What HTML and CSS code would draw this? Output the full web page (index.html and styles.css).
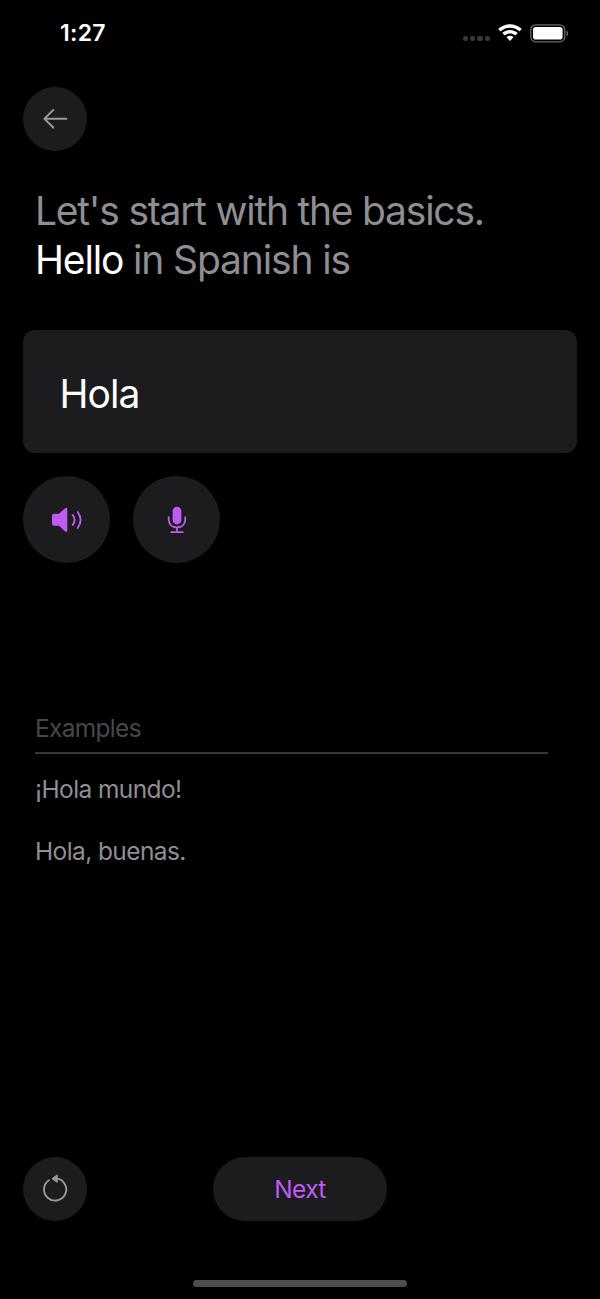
FILE: index.html
```html
<!DOCTYPE html>
<html lang="en">
<head>
<meta charset="utf-8">
<title>Spanish basics</title>
<link rel="stylesheet" href="styles.css">
</head>
<body>
<div class="screen">
  <header class="status">
    <span class="time">1:27</span>
    <div class="indicators">
      <div class="signal"><i></i><i></i><i></i><i></i></div>
      <svg class="wifi" width="24" height="18" viewBox="0 0 24 18" fill="#fff">
        <path d="M12 .2c4.300 0 8.300 1.600 11.300 4.400.3.300.3.700 0 1l-1.400 1.400c-.3.300-.6.300-.9 0C18.600 4.900 15.400 3.700 12 3.700S5.400 4.900 3 7c-.3.300-.6.300-.9 0L.7 5.600c-.3-.3-.3-.7 0-1C3.700 1.800 7.700.2 12 .2z"/>
        <path d="M12 5.900c2.700 0 5.200 1 7.200 2.700.3.300.3.700 0 1l-1.500 1.500c-.3.300-.6.300-.9 0C15.500 10 13.800 9.400 12 9.400s-3.500.6-4.800 1.700c-.3.300-.6.300-.9 0L4.800 9.600c-.3-.3-.3-.7 0-1C6.800 6.900 9.300 5.900 12 5.900z"/>
        <path d="M12 11.700c1.200 0 2.200.4 3 1.100.3.300.3.700 0 1l-2.500 2.700c-.3.300-.7.300-1 0L9 13.800c-.3-.3-.3-.7 0-1 .8-.7 1.800-1.100 3-1.100z"/>
      </svg>
      <svg class="battery" width="39" height="19" viewBox="0 0 39 19">
        <rect x=".8" y=".8" width="34" height="17" rx="5" fill="none" stroke="#696969" stroke-width="1.300"/>
        <rect x="3" y="3" width="29.600" height="12.600" rx="2.800" fill="#fff"/>
        <path d="M36.500 6.500c2.200.8 2.200 5 0 5.800z" fill="#696969"/>
      </svg>
    </div>
  </header>
  <button class="round" aria-label="Back">
    <svg width="26" height="22" viewBox="0 0 26 22" fill="none" stroke="#98989f" stroke-width="1.900" stroke-linecap="round" stroke-linejoin="round"><path d="M24.400 10.800H2.400M11.400 1.900 2.400 10.800l9 8.900"/></svg>
  </button>
  <h1 class="prompt"><span class="line one">Let's start with the basics.</span><span class="line two"><b>Hello</b> in Spanish is</span></h1>
  <div class="answer"><span>Hola</span></div>
  <div class="tools">
    <button class="tool" aria-label="Listen">
      <svg width="32" height="26" viewBox="0 0 32 26">
        <path d="M3 6.800h5l5.800-5.400c1.100-1 2.500-.5 2.500.8v21.200c0 1.500-1.400 1.900-2.500.9L8 18.800H3c-1.200 0-2-.8-2-2v-8c0-1.200.8-2 2-2z" fill="#bf5af2"/>
        <path d="M21.700 8c2.300 3 2.300 7 0 10M26.700 5c3.600 5 3.600 11 0 16" fill="none" stroke="#bf5af2" stroke-width="1.900" stroke-linecap="round"/>
      </svg>
    </button>
    <button class="tool" aria-label="Speak">
      <svg width="20" height="28" viewBox="0 0 20 28">
        <rect x="5.600" y=".8" width="8.800" height="17.600" rx="4.400" fill="#bf5af2"/>
        <path d="M1.700 11.200v2.100c0 5 3.400 8.200 8.300 8.200s8.300-3.200 8.300-8.200v-2.100M10 21.500v4.700M4.300 26.200h11.400" fill="none" stroke="#bf5af2" stroke-width="1.800" stroke-linecap="round"/>
      </svg>
    </button>
  </div>
  <section class="examples">
    <h2>Examples</h2>
    <p class="mundo">¡Hola mundo!</p>
    <p class="buenas">Hola, buenas.</p>
  </section>
  <footer class="actions">
    <button class="round" aria-label="Restart">
      <svg width="26" height="30" viewBox="0 0 26 30">
        <path d="M6.900 6.300A11.100 11.100 0 1 0 13.700 4.400" fill="none" stroke="#98989f" stroke-width="1.900" stroke-linecap="round"/>
        <path d="M9.900 4.200 14.700.7c.5-.4 1-.1 1 .5v7c0 .6-.5.800-1 .4L9.900 5.200c-.4-.3-.4-.7 0-1z" fill="#98989f"/>
      </svg>
    </button>
    <button class="next">Next</button>
  </footer>
  <div class="home"></div>
</div>
</body>
</html>
```
FILE: styles.css
```css
* { box-sizing: border-box; }
body { margin: 0; background: #000; }
button { border: 0; padding: 0; font: inherit; }
svg { display: block; }

.screen {
  width: 600px;
  height: 1299px;
  display: flex;
  flex-direction: column;
  overflow: hidden;
  padding: 0 23px;
  background: #000;
  color: #8e8e93;
  font-family: Inter, "Liberation Sans", sans-serif;
  font-weight: 400;
}

.status {
  height: 87px;
  flex: none;
  display: flex;
  justify-content: space-between;
  padding: 18px 8px 0 37px;
}
.time {
  color: #fff;
  font-size: 23px;
  line-height: 30px;
  font-weight: 600;
  letter-spacing: 0.3px;
}
.indicators { display: flex; height: 30px; }
.signal { display: flex; gap: 2px; padding-top: 18px; margin-right: 8px; }
.signal i { width: 5.300px; height: 5.300px; border-radius: 2px; background: #373737; }
.wifi { margin: 6px 8px 0 0; }
.battery { margin-top: 6px; }

.round {
  width: 64px;
  height: 64px;
  border-radius: 50%;
  flex: none;
  display: grid;
  place-items: center;
  background: #1c1c1e;
}

.prompt {
  margin: 35px 0 0 12px;
  font-size: 39px;
  line-height: 49px;
  font-weight: 400;
  letter-spacing: -1.150px;
}
.prompt b { color: #fff; font-weight: 400; }
.line { display: block; white-space: nowrap; }
.one { letter-spacing: -1.230px; }

.answer {
  height: 123px;
  margin-top: 46px;
  padding-left: 36.500px;
  flex: none;
  display: flex;
  align-items: center;
  border-radius: 12px;
  background: #1c1c1e;
  color: #fff;
  font-size: 39px;
  line-height: 49px;
  letter-spacing: -0.900px;
}
.answer span { padding-top: 4px; }

.tools { display: flex; gap: 23px; margin-top: 23px; }
.tool {
  width: 87px;
  height: 87px;
  border-radius: 50%;
  display: grid;
  place-items: center;
  background: #1c1c1e;
}

.examples {
  width: 513px;
  margin: 147px 0 0 12px;
  font-size: 24.500px;
  line-height: 34px;
  letter-spacing: -0.600px;
}
.examples h2 {
  margin: 0;
  height: 44px;
  font-size: 24.500px;
  line-height: 36px;
  font-weight: 400;
  letter-spacing: -0.700px;
  color: #48484a;
  border-bottom: 2px solid #38383a;
}
.examples p { margin: 0; }
.mundo { padding-top: 18px; }
.buenas { padding-top: 28px; }

.actions {
  margin-top: auto;
  display: flex;
  gap: 126px;
}
.next {
  width: 174px;
  height: 64px;
  border-radius: 32px;
  background: #1c1c1e;
  color: #bf5af2;
  font-size: 24.500px;
  font-weight: 400;
  letter-spacing: -0.700px;
}

.home {
  width: 214px;
  height: 7px;
  flex: none;
  margin: 59px auto 12px;
  border-radius: 4px;
  background: #4d4d4d;
}
```
